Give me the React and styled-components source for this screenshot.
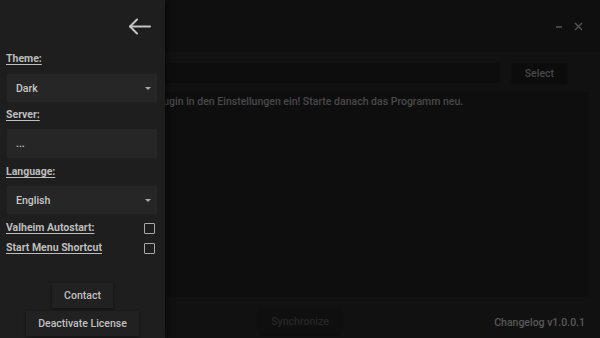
import React from 'react';
import styled, { createGlobalStyle } from 'styled-components';

const GlobalStyle = createGlobalStyle`
    html, body {
        margin: 0;
        padding: 0;
        background: #000;
        font-family: Roboto, "Liberation Sans", sans-serif;
    }
    * { box-sizing: border-box; }
`;

const Screen = styled.div`
    position: relative;
    width: 600px;
    height: 338px;
    overflow: hidden;
`;

// ---- main window (behind the drawer)

const Window = styled.div`
    display: flex;
    flex-direction: column;
    width: 100%;
    height: 100%;
    background: #222;
`;

const TitleBar = styled.div`
    display: flex;
    align-items: center;
    justify-content: space-between;
    height: 52px;
    padding: 0 17px 0 14px;
    background: #1e1e1e;
    color: #aaa;
    font-size: 13px;
    font-weight: 500;
`;

const WindowControls = styled.div`
    display: flex;
    align-items: center;
    gap: 11px;
`;

const Content = styled.div`
    flex: 1;
    display: flex;
    flex-direction: column;
    padding: 11px 11px 0 12px;
`;

const PathRow = styled.div`
    display: flex;
    align-items: center;
    gap: 12px;
    padding-right: 22px;
`;

const PathInput = styled.div`
    flex: 1;
    height: 20px;
    background: #1a1a1a;
`;

const SmallButton = styled.div`
    display: flex;
    align-items: center;
    justify-content: center;
    height: 20px;
    padding: 0 13px;
    background: #181818;
    color: ${({ disabled }) => (disabled ? '#4c4c4c' : '#8e8e8e')};
    font-size: 10.5px;
    font-weight: 500;
    box-shadow: 0 1px 2px rgba(0, 0, 0, 0.4);
`;

const LogBox = styled.div`
    flex: 1;
    margin-top: 9px;
    padding: 3px 10px 3px 23px;
    background: #1c1c1c;
    color: #909090;
    font-size: 10.5px;
    font-weight: 500;
    line-height: 14px;
`;

const Footer = styled.div`
    display: grid;
    grid-template-columns: 1fr auto 1fr;
    height: 41px;
`;

const SyncButton = styled(SmallButton)`
    grid-column: 2;
    align-self: end;
    height: 26px;
    padding: 0 11px;
    margin-bottom: 4px;
    background: #1e1e1e;
`;

const Changelog = styled.div`
    grid-column: 3;
    justify-self: end;
    align-self: end;
    margin: 0 15px 9px 0;
    color: #b0b0b0;
    font-size: 10.5px;
    font-weight: 500;
`;

// ---- drawer

const Backdrop = styled.div`
    position: absolute;
    inset: 0;
    background: rgba(0, 0, 0, 0.5);
`;

const Drawer = styled.div`
    position: absolute;
    top: 0;
    left: 0;
    bottom: 0;
    width: 165px;
    display: flex;
    flex-direction: column;
    background: #1e1e1e;
    box-shadow: 2px 0 6px rgba(0, 0, 0, 0.5);
`;

const DrawerHeader = styled.div`
    display: flex;
    align-items: center;
    justify-content: flex-end;
    height: 52px;
    padding-right: 14px;
`;

const Label = styled.div`
    margin: ${({ top }) => top || 0}px 0 0 6px;
    height: 14px;
    line-height: 14px;
    color: #bdbdbd;
    font-size: 10.5px;
    font-weight: 700;
    text-decoration: underline;
    text-underline-offset: 2px;
`;

const Field = styled.div`
    display: flex;
    align-items: center;
    justify-content: space-between;
    margin: ${({ top }) => top || 0}px 8px 0 7px;
    height: ${({ tall }) => (tall ? 29 : 28)}px;
    padding: 0 6px 0 9px;
    background: #262626;
    color: #c8c8c8;
    font-size: 10.5px;
    font-weight: 500;
`;

const Caret = styled.span`
    width: 0;
    height: 0;
    border-left: 3px solid transparent;
    border-right: 3px solid transparent;
    border-top: 3px solid #aaa;
`;

const CheckRow = styled.div`
    display: flex;
    align-items: center;
    justify-content: space-between;
    height: 14px;
    margin-top: ${({ top }) => top}px;
    padding-right: 10px;

    ${Label} {
        margin-top: 0;
    }
`;

const Checkbox = styled.span`
    width: 11px;
    height: 11px;
    border: 1.5px solid #a8a8a8;
    border-radius: 1px;
`;

const DrawerButtons = styled.div`
    margin-top: auto;
    display: flex;
    flex-direction: column;
    align-items: center;
    gap: 3px;
    padding: 0 0 2px 0;
`;

const DrawerButton = styled.div`
    display: flex;
    align-items: center;
    justify-content: center;
    height: 25px;
    padding: 0 12px;
    background: #212121;
    color: #c0c0c0;
    font-size: 10.5px;
    font-weight: 500;
    box-shadow: 0 1px 3px rgba(0, 0, 0, 0.45);
`;

function BackArrow() {
    return (
        <svg width="23" height="17" viewBox="0 0 23 17" fill="none" stroke="#c4c4c4" strokeWidth="2" strokeLinecap="round" strokeLinejoin="round">
            <path d="M22 8.5H2" />
            <path d="M9 1.5L2 8.5L9 15.5" />
        </svg>
    );
}

function Minimize() {
    return (
        <svg width="8" height="8" viewBox="0 0 8 8" stroke="#aaa" strokeWidth="1.5">
            <path d="M1 5H7" />
        </svg>
    );
}

function Close() {
    return (
        <svg width="9" height="9" viewBox="0 0 9 9" stroke="#aaa" strokeWidth="1.4">
            <path d="M1 1L8 8M8 1L1 8" />
        </svg>
    );
}

export default function App() {
    return (
        <Screen>
            <GlobalStyle />
            <Window>
                <TitleBar>
                    <span>Valheim Plugin Sync</span>
                    <WindowControls>
                        <Minimize />
                        <Close />
                    </WindowControls>
                </TitleBar>
                <Content>
                    <PathRow>
                        <PathInput />
                        <SmallButton>Select</SmallButton>
                    </PathRow>
                    <LogBox>Bitte trage den Pfad zum Plugin in den Einstellungen ein! Starte danach das Programm neu.</LogBox>
                </Content>
                <Footer>
                    <SyncButton disabled>Synchronize</SyncButton>
                    <Changelog>Changelog v1.0.0.1</Changelog>
                </Footer>
            </Window>

            <Backdrop />

            <Drawer>
                <DrawerHeader>
                    <BackArrow />
                </DrawerHeader>

                <Label>Theme:</Label>
                <Field top={8}>Dark<Caret /></Field>

                <Label top={6}>Server:</Label>
                <Field top={7} tall>...</Field>

                <Label top={7}>Language:</Label>
                <Field top={7}>English<Caret /></Field>

                <CheckRow top={7}>
                    <Label>Valheim Autostart:</Label>
                    <Checkbox />
                </CheckRow>
                <CheckRow top={6}>
                    <Label>Start Menu Shortcut</Label>
                    <Checkbox />
                </CheckRow>

                <DrawerButtons>
                    <DrawerButton>Contact</DrawerButton>
                    <DrawerButton>Deactivate License</DrawerButton>
                </DrawerButtons>
            </Drawer>
        </Screen>
    );
}
